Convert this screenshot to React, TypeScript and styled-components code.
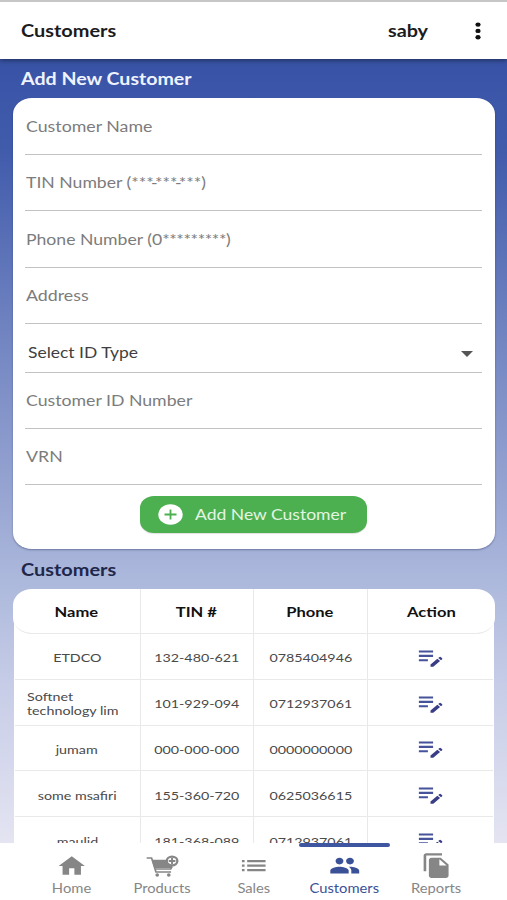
import React from 'react';
import styled, { createGlobalStyle } from 'styled-components';

const GlobalStyle = createGlobalStyle`
  * { box-sizing: border-box; }
  html, body { margin: 0; padding: 0; }
  body { font-family: Lato, "Open Sans", sans-serif; color: #1b1b1d; background: #fff; }
`;

const Screen = styled.div`
  display: flex;
  flex-direction: column;
  width: 507px;
  height: 900px;
  overflow: hidden;
  border-top: 2px solid #c6c6c6;
  background: #fff;
`;

/* The interface type is set wide: glyphs are stretched sideways only. */
const Wide = styled.span<{ $size: number; $x?: number; $origin?: string }>`
  display: inline-block;
  white-space: pre;
  font-size: ${(p) => p.$size}px;
  line-height: 20px;
  transform: scaleX(${(p) => p.$x ?? 1.19});
  transform-origin: ${(p) => p.$origin ?? 'left'} center;
`;

const AppBar = styled.header`
  display: flex;
  align-items: center;
  flex: none;
  height: 57px;
  padding: 1px 26px 0 20.5px;
  background: #fff;
  box-shadow: 0 1px 5px rgba(0, 0, 0, 0.5);
  z-index: 1;
  font-weight: 700;
`;

const UserName = styled.div`
  margin-left: auto;
  margin-right: 53.5px;
`;

const MenuButton = styled.button`
  display: flex;
  padding: 0;
  border: 0;
  background: none;
`;

const Body = styled.main`
  flex: none;
  height: 784px;
  padding: 10px 12px 0 13px;
  overflow: hidden;
  background: linear-gradient(180deg, #3853a6 0%, #425cac 12%, #7386c2 36%, #9aa7d3 57%, #adb9dc 67%, #c7cde7 80%, #e4e4f2 100%);
`;

const SectionTitle = styled.h2<{ $color: string }>`
  display: flex;
  margin: 0;
  padding-left: 7.5px;
  height: 20px;
  font-weight: 700;
  line-height: 20px;
  color: ${(p) => p.$color};
`;

const FormCard = styled.form`
  height: 451px;
  margin: 9px 0 11px;
  padding: 0 13px 0 12px;
  border-radius: 19px / 16px;
  background: #fff;
  box-shadow: 0 1px 2px rgba(20, 30, 80, 0.4);
`;

const Field = styled.div<{ $height: number; $select?: boolean }>`
  display: flex;
  align-items: flex-end;
  justify-content: space-between;
  height: ${(p) => p.$height}px;
  padding: ${(p) => (p.$select ? '0 9px 10px 3px' : '0 0 18px 0.5px')};
  border-bottom: 1.5px solid #c2c2c2;
  color: ${(p) => (p.$select ? '#3f3f3f' : '#7c7c7c')};
`;

const MaskDash = styled.span`
  margin: 0 -2.2px;
`;

const MaskStars = styled.span`
  letter-spacing: -0.33px;
`;

const Caret = styled.svg`
  width: 12px;
  height: 6px;
  margin-bottom: 4.5px;
`;

const SubmitButton = styled.button`
  display: flex;
  align-items: center;
  width: 227px;
  height: 37px;
  margin: 11px 0 0 115px;
  padding: 0 0 1px 18px;
  gap: 12px;
  border: 0;
  border-radius: 14px / 12px;
  background: #4caf50;
  color: #e2f5e3;
  font-family: inherit;
  box-shadow: 0 1px 1px rgba(0, 0, 0, 0.12);
`;

const Table = styled.div`
  display: flow-root;
  margin-top: 9px;
`;

const Row = styled.div<{ $head?: boolean }>`
  display: grid;
  position: relative;
  z-index: ${(p) => (p.$head ? 1 : 0)};
  grid-template-columns: ${(p) => (p.$head ? '127px' : '125px')} 113px 114px 1fr;
  height: ${(p) => (p.$head ? '45px' : '45.8px')};
  margin: ${(p) => (p.$head ? '0' : '0 2px 0 2px')};
  border-bottom: 1px solid #e9e9e9;
  background: #fff;
  border-radius: ${(p) => (p.$head ? '19px / 16px' : '0')};
  font-weight: ${(p) => (p.$head ? 700 : 400)};
  color: ${(p) => (p.$head ? '#111' : '#4a4a4a')};
`;

const TableBody = styled.div`
  margin-top: -25px;
  padding-top: 25px;
  background: linear-gradient(#fff, #fff) 1px 0 / calc(100% - 2px) 100% no-repeat;
`;

const Cell = styled.div<{ $drop?: number; $shift?: number }>`
  display: flex;
  align-items: center;
  justify-content: center;
  padding-top: ${(p) => p.$drop ?? 0}px;
  padding-right: ${(p) => p.$shift ?? 0}px;
  & + & { border-left: 1px solid #e9e9e9; }
`;

const TwoLine = styled.div`
  width: 101px;
  font-size: 12px;
  line-height: 14px;
  white-space: pre;
  transform: scaleX(1.19);
  transform-origin: left center;
`;

const Nav = styled.nav`
  display: grid;
  grid-template-columns: repeat(5, 91.2px);
  flex: none;
  height: 57px;
  padding-left: 25.5px;
  background: #fff;
  z-index: 2;
`;

const NavItem = styled.div<{ $active?: boolean }>`
  display: flex;
  flex-direction: column;
  align-items: center;
  color: ${(p) => (p.$active ? '#3a5197' : '#868686')};
  &::before {
    content: '';
    align-self: stretch;
    height: 4px;
    border-radius: 2px;
    background: ${(p) => (p.$active ? '#3d569f' : 'transparent')};
  }
`;

const NavIcon = styled.div`
  display: flex;
  align-items: center;
  justify-content: center;
  height: 30px;
  padding: 7px 0 0 1px;
`;

const NavLabel = styled.div`
  height: 20px;
`;

const Glyph = ({ d, w = 31.5, h = 27 }: { d: string; w?: number; h?: number }) => (
  <svg width={w} height={h} viewBox="0 0 24 24" preserveAspectRatio="none" fill="currentColor">
    <path d={d} />
  </svg>
);

const EditNote = () => (
  <svg width="31" height="26" viewBox="0 0 24 24" preserveAspectRatio="none" fill="#46529a">
    <path d="M3 6h11v1.9H3zM3 10h11v1.9H3zM3 14h7v1.9H3z" />
    <path fill="#393d86" d="M18.01 12.87l.71-.71a.996.996 0 0 1 1.41 0l.71.71c.39.39.39 1.02 0 1.41l-.71.71zM17.3 13.58l-5.3 5.3V21h2.12l5.3-5.3z" />
  </svg>
);

const CartPlus = () => (
  <svg width="33" height="22" viewBox="0 0 100 66" preserveAspectRatio="none" fill="none" stroke="currentColor">
    <path d="M2 9h15l13 42h46M25 42h50l4-7" strokeWidth="5" />
    <path d="M17 14h44q4 18 20 20l-3 5H25z" fill="currentColor" stroke="none" />
    <ellipse cx="79" cy="18" rx="16" ry="13" strokeWidth="7" fill="#fff" />
    <path d="M79 9v18M69 18h20" strokeWidth="6" />
    <ellipse cx="34" cy="60" rx="5.5" ry="5" fill="currentColor" stroke="none" />
    <ellipse cx="69" cy="60" rx="5.5" ry="5" fill="currentColor" stroke="none" />
  </svg>
);

const icons = {
  home: 'M10 20v-6h4v6h5v-8h3L12 3 2 12h3v8z',
  list: 'M3 13h2v-2H3v2zm0 4h2v-2H3v2zm0-8h2V7H3v2zm4 4h14v-2H7v2zm0 4h14v-2H7v2zM7 7v2h14V7H7z',
  people:
    'M16 11c1.66 0 2.99-1.34 2.99-3S17.66 5 16 5s-3 1.34-3 3 1.34 3 3 3zm-8 0c1.66 0 2.99-1.34 2.99-3S9.66 5 8 5 5 6.34 5 8s1.34 3 3 3zm0 2c-2.33 0-7 1.17-7 3.5V19h14v-2.5c0-2.33-4.67-3.5-7-3.5zm8 0c-.29 0-.62.02-.97.05 1.16.84 1.97 1.97 1.97 3.45V19h6v-2.5c0-2.33-4.67-3.5-7-3.5z',
  copy:
    'M16 1H4c-1.1 0-2 .9-2 2v14h2V3h12V1zm-1 4 6 6v10c0 1.1-.9 2-2 2H7.99C6.89 23 6 22.1 6 21l.01-14c0-1.1.89-2 1.99-2h7zm-1 7h5.5L14 6.5V12z',
};

type FieldSpec = { id: string; label: React.ReactNode; height: number; x: number; select?: boolean };

const fields: FieldSpec[] = [
  { id: 'name', label: 'Customer Name', height: 57, x: 1.2 },
  {
    id: 'tin',
    label: <>TIN Number (***<MaskDash>-</MaskDash>***<MaskDash>-</MaskDash>***)</>,
    height: 56,
    x: 1.19,
  },
  { id: 'phone', label: <>Phone Number (0<MaskStars>*********</MaskStars>)</>, height: 56.5, x: 1.19 },
  { id: 'address', label: 'Address', height: 56, x: 1.2 },
  { id: 'type', label: 'Select ID Type', height: 49, x: 1.18, select: true },
  { id: 'number', label: 'Customer ID Number', height: 56.5, x: 1.195 },
  { id: 'vrn', label: 'VRN', height: 56, x: 1.2 },
];

const customers = [
  ['ETDCO', '132-480-621', '0785404946'],
  ['Softnet\ntechnology lim', '101-929-094', '0712937061'],
  ['jumam', '000-000-000', '0000000000'],
  ['some msafiri', '155-360-720', '0625036615'],
  ['maulid', '181-368-089', '0712937061'],
];

const tabs = [
  { label: 'Home', icon: <Glyph d={icons.home} h={26} /> },
  { label: 'Products', icon: <CartPlus /> },
  { label: 'Sales', icon: <Glyph d={icons.list} /> },
  { label: 'Customers', icon: <Glyph d={icons.people} />, active: true },
  { label: 'Reports', icon: <Glyph d={icons.copy} /> },
];

export default function App() {
  return (
    <>
      <GlobalStyle />
      <Screen>
        <AppBar>
          <Wide $size={16.6} $x={1.2}>Customers</Wide>
          <UserName>
            <Wide $size={16.6}>saby</Wide>
          </UserName>
          <MenuButton aria-label="More">
            <svg width="6" height="18" viewBox="0 0 6 18" fill="#111">
              <ellipse cx="3" cy="2.6" rx="2.6" ry="2.2" />
              <ellipse cx="3" cy="8.9" rx="2.6" ry="2.2" />
              <ellipse cx="3" cy="15.2" rx="2.6" ry="2.2" />
            </svg>
          </MenuButton>
        </AppBar>
        <Body>
          <SectionTitle $color="#eef3ff">
            <Wide $size={16.6} $x={1.18}>Add New Customer</Wide>
          </SectionTitle>
          <FormCard>
            {fields.map((f) => (
              <Field key={f.id} $height={f.height} $select={f.select}>
                <Wide $size={14.8} $x={f.x}>{f.label}</Wide>
                {f.select && (
                  <Caret viewBox="0 0 12 6">
                    <path d="M0 0h12L6 6z" fill="#555" />
                  </Caret>
                )}
              </Field>
            ))}
            <SubmitButton type="button">
              <svg width="25" height="21" viewBox="0 0 25 21">
                <ellipse cx="12.5" cy="10.5" rx="12.2" ry="10.3" fill="#fff" />
                <path d="M12.5 5.5v10M6.5 10.5h12" stroke="#4caf50" strokeWidth="1.8" />
              </svg>
              <Wide $size={14.8} $x={1.185}>Add New Customer</Wide>
            </SubmitButton>
          </FormCard>
          <SectionTitle $color="#1e2749">
            <Wide $size={16.6} $x={1.2}>Customers</Wide>
          </SectionTitle>
          <Table>
            <Row $head>
              {['Name', 'TIN #', 'Phone', 'Action'].map((h) => (
                <Cell key={h} $drop={1} $shift={h === 'Name' ? 0 : 1}>
                  <Wide $size={13.9} $origin="center">{h}</Wide>
                </Cell>
              ))}
            </Row>
            <TableBody>
              {customers.map(([name, tin, phone]) => (
                <Row key={tin}>
                  <Cell $drop={4} $shift={1}>
                    {name.includes('\n') ? (
                      <TwoLine>{name}</TwoLine>
                    ) : (
                      <Wide $size={12} $origin="center">{name}</Wide>
                    )}
                  </Cell>
                  <Cell $drop={4}><Wide $size={12} $origin="center">{tin}</Wide></Cell>
                  <Cell $drop={4}><Wide $size={12} $origin="center">{phone}</Wide></Cell>
                  <Cell $drop={1} $shift={1}><EditNote /></Cell>
                </Row>
              ))}
            </TableBody>
          </Table>
        </Body>
        <Nav>
          {tabs.map((t) => (
            <NavItem key={t.label} $active={t.active}>
              <NavIcon>{t.icon}</NavIcon>
              <NavLabel>
                <Wide $size={12.4} $origin="center">{t.label}</Wide>
              </NavLabel>
            </NavItem>
          ))}
        </Nav>
      </Screen>
    </>
  );
}
